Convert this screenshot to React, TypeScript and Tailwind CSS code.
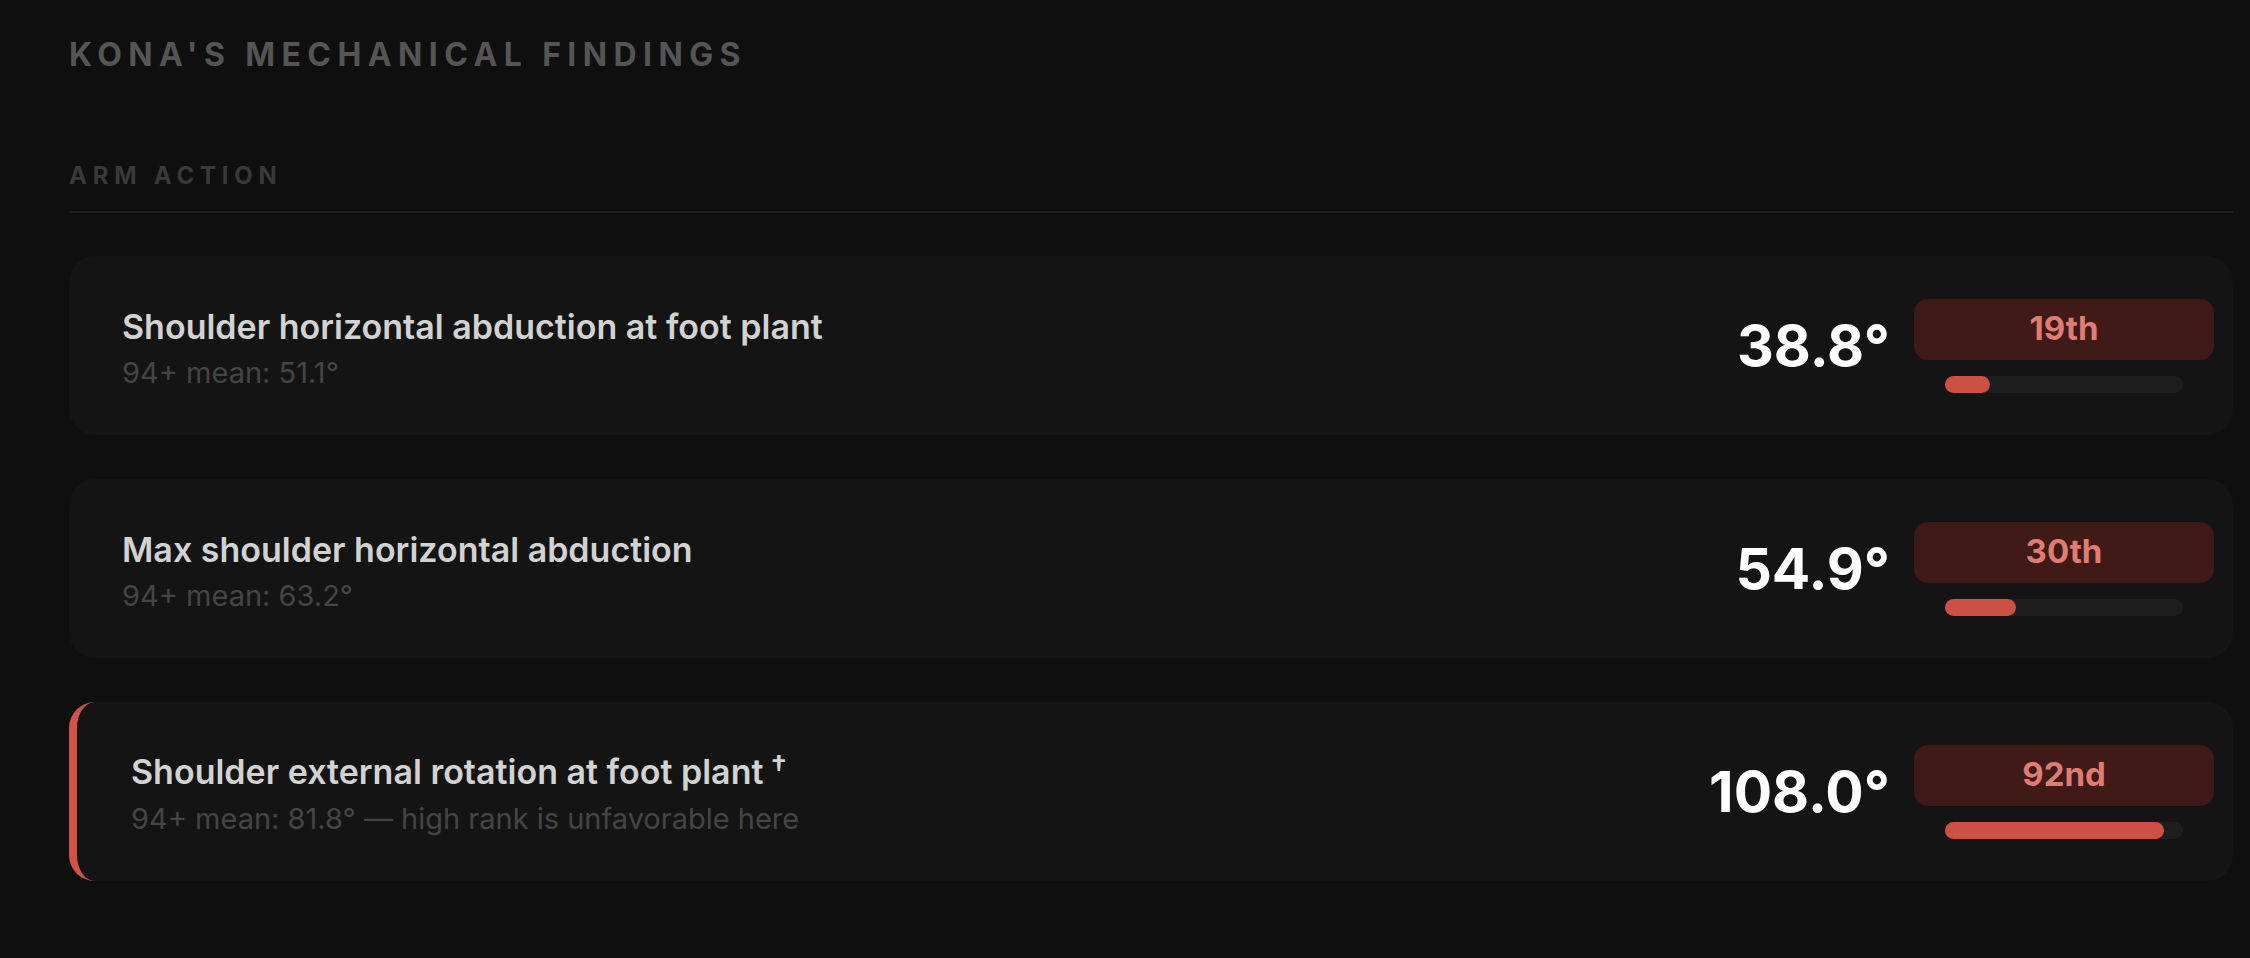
const findings = [
  {
    label: "Shoulder horizontal abduction at foot plant",
    note: "94+ mean: 51.1°",
    value: "38.8°",
    rank: "19th",
    pct: 19,
    flag: false,
  },
  {
    label: "Max shoulder horizontal abduction",
    note: "94+ mean: 63.2°",
    value: "54.9°",
    rank: "30th",
    pct: 30,
    flag: false,
  },
  {
    label: "Shoulder external rotation at foot plant",
    note: "94+ mean: 81.8° — high rank is unfavorable here",
    value: "108.0°",
    rank: "92nd",
    pct: 92,
    flag: true,
  },
]

function FindingCard({ f }: { f: (typeof findings)[number] }) {
  return (
    <div
      className={
        "flex h-[179px] items-center rounded-[26px] bg-[#141414] pr-[19px] " +
        (f.flag ? "border-l-[8px] border-[#cf5346] pl-[54px]" : "pl-[53px]")
      }
    >
      <div className="flex-1 pt-[6px]">
        <div className="text-[34px] font-semibold leading-[38px] text-[#d2d2d2]">
          {f.label}
          {f.flag && (
            <span className="relative -top-[7px] ml-[7px] text-[30px] font-semibold text-[#d2d2d2]">†</span>
          )}
        </div>
        <div className="mt-[10px] text-[29px] leading-[34px] text-[#454545]">{f.note}</div>
      </div>
      <div className="mr-[24px] text-[57px] font-bold leading-none text-white">{f.value}</div>
      <div className="flex w-[300px] flex-col items-center">
        <div className="flex h-[61px] w-full items-center justify-center rounded-[14px] bg-[#3f1a16] text-[33px] font-bold text-[#df7d74]">
          {f.rank}
        </div>
        <div className="mt-[16px] h-[17px] w-[238px] rounded-full bg-[#1e1e1e]">
          <div className="h-full rounded-full bg-[#cc5144]" style={{ width: `${f.pct}%` }} />
        </div>
      </div>
    </div>
  )
}

export default function App() {
  return (
    <div
      className="min-h-screen bg-[#0f0f0f] pl-[69px] pr-[17px] pt-[37px] pb-[60px]"
      style={{ fontFamily: "Inter, 'Noto Sans', sans-serif" }}
    >
      <h1 className="text-[32px] font-bold leading-[36px] tracking-[0.2em] text-[#555555]">
        KONA'S MECHANICAL FINDINGS
      </h1>
      <h2 className="mt-[89px] text-[24px] font-bold leading-[28px] tracking-[0.24em] text-[#393939]">
        ARM ACTION
      </h2>
      <div className="mt-[21px] h-[2px] bg-[#1f1f1f]" />
      <div className="mt-[43px] flex flex-col gap-[44px]">
        {findings.map((f) => (
          <FindingCard key={f.label} f={f} />
        ))}
      </div>
    </div>
  )
}
